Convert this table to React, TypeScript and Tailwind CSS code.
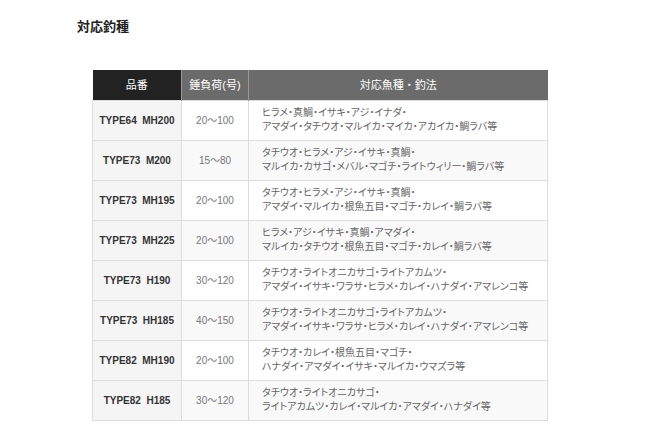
const rows = [
  { code: "TYPE64  MH200", range: "20〜100", l1: "ヒラメ・真鯛・イサキ・アジ・イナダ・", l2: "アマダイ・タチウオ・マルイカ・マイカ・アカイカ・鯛ラバ等" },
  { code: "TYPE73  M200", range: "15〜80", l1: "タチウオ・ヒラメ・アジ・イサキ・真鯛・", l2: "マルイカ・カサゴ・メバル・マゴチ・ライトウィリー・鯛ラバ等" },
  { code: "TYPE73  MH195", range: "20〜100", l1: "タチウオ・ヒラメ・アジ・イサキ・真鯛・", l2: "アマダイ・マルイカ・根魚五目・マゴチ・カレイ・鯛ラバ等" },
  { code: "TYPE73  MH225", range: "20〜100", l1: "ヒラメ・アジ・イサキ・真鯛・アマダイ・", l2: "マルイカ・タチウオ・根魚五目・マゴチ・カレイ・鯛ラバ等" },
  { code: "TYPE73  H190", range: "30〜120", l1: "タチウオ・ライトオニカサゴ・ライトアカムツ・", l2: "アマダイ・イサキ・ワラサ・ヒラメ・カレイ・ハナダイ・アマレンコ等" },
  { code: "TYPE73  HH185", range: "40〜150", l1: "タチウオ・ライトオニカサゴ・ライトアカムツ・", l2: "アマダイ・イサキ・ワラサ・ヒラメ・カレイ・ハナダイ・アマレンコ等" },
  { code: "TYPE82  MH190", range: "20〜100", l1: "タチウオ・カレイ・根魚五目・マゴチ・", l2: "ハナダイ・アマダイ・イサキ・マルイカ・ウマズラ等" },
  { code: "TYPE82  H185", range: "30〜120", l1: "タチウオ・ライトオニカサゴ・", l2: "ライトアカムツ・カレイ・マルイカ・アマダイ・ハナダイ等" },
]

const App = () => {
  return (
    <main className="min-h-screen bg-white font-['Liberation_Sans','Noto_Sans_CJK_JP',sans-serif]">
      <h2 className="pl-[77px] pt-[18px] text-[13px] font-bold leading-[18px] text-[#222]">対応釣種</h2>
      <table className="ml-[92px] mt-[34px] w-[456px] table-fixed border-collapse text-[10px]">
        <colgroup>
          <col className="w-[89px]" />
          <col className="w-[67px]" />
          <col />
        </colgroup>
        <thead>
          <tr className="h-[30px] text-[11px] text-white">
            <th className="bg-[#222] font-normal">品番</th>
            <th className="border-l border-[#999] bg-[#6b6b6b] font-normal">錘負荷(号)</th>
            <th className="border-l border-[#999] bg-[#6b6b6b] font-normal">対応魚種・釣法</th>
          </tr>
        </thead>
        <tbody>
          {rows.map((r, i) => (
            <tr key={r.code} className={i % 2 === 1 ? "h-[40px] bg-[#f9f9f9]" : "h-[40px] bg-white"}>
              <td className="border border-[#ddd] bg-[#f5f5f5] text-center font-bold whitespace-pre text-[#333]">{r.code}</td>
              <td className="border border-[#ddd] text-center text-[#777]">{r.range}</td>
              <td className="border border-[#ddd] pl-[13px] leading-[14px] whitespace-nowrap text-[#666] [font-feature-settings:'palt']">
                <div>{r.l1}</div>
                <div>{r.l2}</div>
              </td>
            </tr>
          ))}
        </tbody>
      </table>
    </main>
  )
}

export default App
